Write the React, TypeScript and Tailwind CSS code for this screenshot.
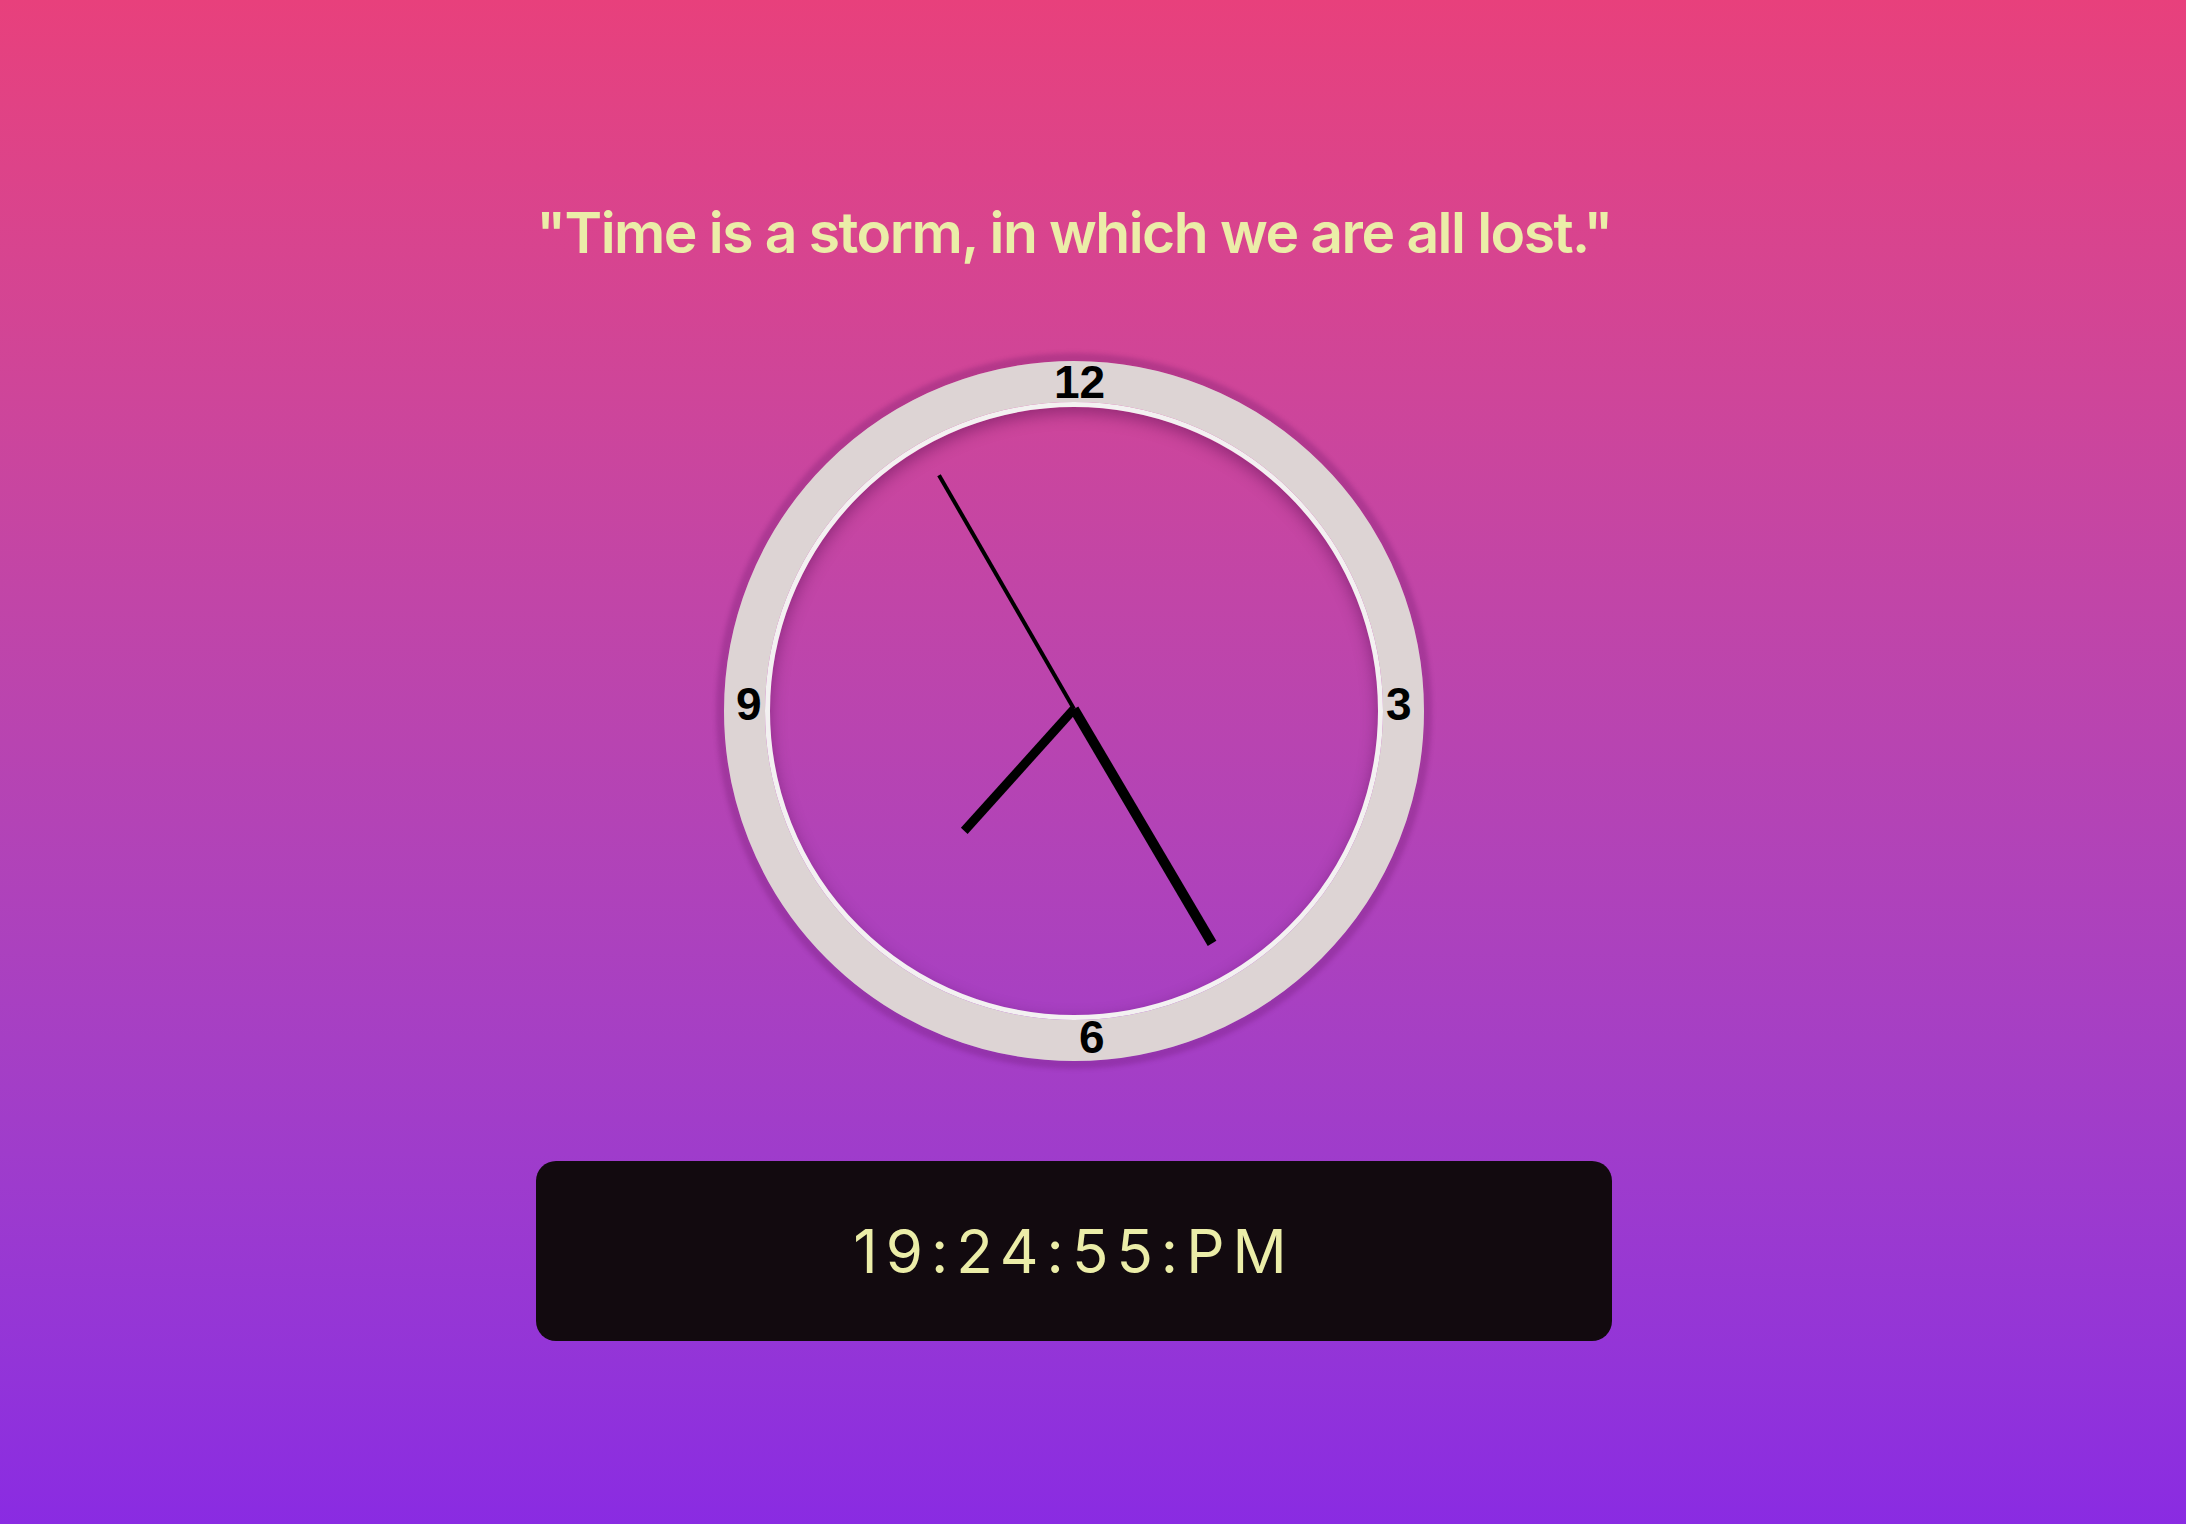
const TIME = { h: 19, m: 24, s: 55 };

const CX = 350;
const CY = 348;

function handEnd(angle: number, length: number) {
  const rad = (angle * Math.PI) / 180;
  return { x: CX + length * Math.sin(rad), y: CY - length * Math.cos(rad) };
}

function Hand({ angle, length, width }: { angle: number; length: number; width: number }) {
  const end = handEnd(angle, length);
  return <line x1={CX} y1={CY} x2={end.x} y2={end.y} stroke="#000" strokeWidth={width} />;
}

function Clock() {
  const hourAngle = (TIME.h % 12) * 30 + TIME.m * 0.5;
  const minuteAngle = TIME.m * 6 + TIME.s * 0.1;
  const secondAngle = TIME.s * 6;

  return (
    <div className="relative h-[700px] w-[700px] rounded-full border-[41px] border-[#ddd4d4] shadow-[0_0_4px_8px_rgba(100,20,100,0.25)]">
      <div className="h-full w-full rounded-full border-[5px] border-[#f3f1f1] shadow-[inset_0_6px_16px_rgba(60,0,60,0.4)]" />

      {/* numbers sit on the ring */}
      <span className="absolute left-[289px] top-[-43px] font-['Liberation_Sans',Arial,sans-serif] text-[46px] font-bold leading-none text-black">
        12
      </span>
      <span className="absolute left-[621px] top-[279px] font-['Liberation_Sans',Arial,sans-serif] text-[46px] font-bold leading-none text-black">
        3
      </span>
      <span className="absolute left-[314px] top-[612px] font-['Liberation_Sans',Arial,sans-serif] text-[46px] font-bold leading-none text-black">
        6
      </span>
      <span className="absolute left-[-29px] top-[279px] font-['Liberation_Sans',Arial,sans-serif] text-[46px] font-bold leading-none text-black">
        9
      </span>

      <svg className="absolute left-[-41px] top-[-41px]" width="700" height="700" viewBox="0 0 700 700">
        <Hand angle={secondAngle} length={270} width={4} />
        <Hand angle={hourAngle} length={164} width={9} />
        <Hand angle={minuteAngle} length={272} width={10} />
      </svg>
    </div>
  );
}

export default function App() {
  const pad = (n: number) => String(n).padStart(2, "0");
  const digital = `${pad(TIME.h)}:${pad(TIME.m)}:${pad(TIME.s)}:${TIME.h >= 12 ? "PM" : "AM"}`;

  return (
    <div className="min-h-[1524px] bg-gradient-to-b from-[#e8407c] to-[#8a2be2] pr-[38px] font-['Inter',sans-serif]">
      <div className="flex flex-col items-center gap-[100px] pt-[204px]">
        <h1 className="text-[57px] font-semibold leading-none tracking-[-0.027em] text-[#ebeda8]">
          "Time is a storm, in which we are all lost."
        </h1>

        <Clock />

        <div className="flex h-[180px] w-[1076px] items-center justify-center rounded-[20px] bg-[#120a0f]">
          <span className="text-[60px] font-normal leading-none tracking-[8px] text-[#ebeda8]">{digital}</span>
        </div>
      </div>
    </div>
  );
}
